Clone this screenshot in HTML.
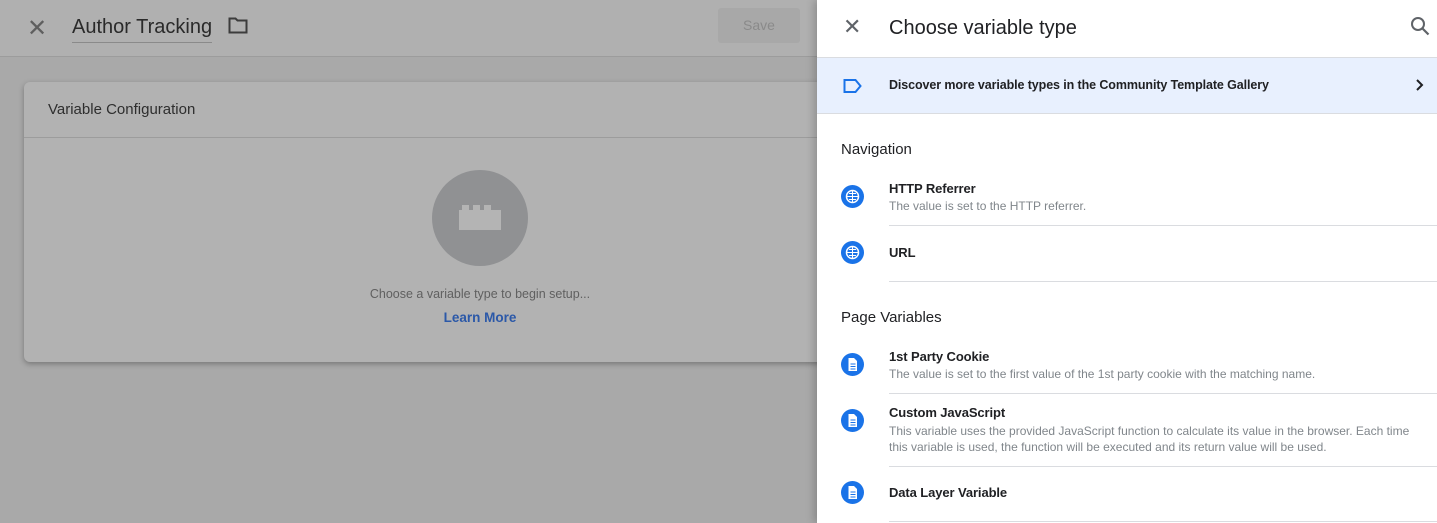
<!DOCTYPE html><html><head><style>
*{margin:0;padding:0;box-sizing:border-box}
body{width:1437px;height:523px;overflow:hidden;font-family:"Liberation Sans",sans-serif;background:#a9a9a9;position:relative}
.abs{position:absolute}
.t{font-size:13px;color:#202124;font-weight:bold;letter-spacing:-.1px}
.d{font-size:12px;color:#80868b}
.hr{position:absolute;left:889px;right:0;height:1px;background:#dadce0}
.ic{position:absolute;left:841px;width:23px;height:23px;border-radius:50%;background:#1a73e8}
</style></head><body>
<div class="abs" style="left:0;top:0;width:817px;height:57px;background:#b0b0b0;border-bottom:1px solid #9c9c9c"></div>
<div class="abs" style="left:27px;top:14px;font-size:24px;color:#5f5f5f">✕</div>
<div class="abs" style="left:72px;top:16px;font-size:20px;color:#2a2a2a;border-bottom:1px solid #8a8a8a;padding-bottom:3px">Author Tracking</div>
<svg class="abs" style="left:228px;top:17px" width="20" height="17" viewBox="0 0 20 17"><path d="M1.5 1.5h6l2 2h9v12h-17z" fill="none" stroke="#3c3c3c" stroke-width="2"/></svg>
<div class="abs" style="left:718px;top:8px;width:82px;height:35px;background:#a8a8a8;border-radius:3px;color:#8a8a8a;font-size:14px;text-align:center;line-height:35px">Save</div>
<div class="abs" style="left:24px;top:82px;width:810px;height:280px;background:#b2b2b2;border-radius:6px;box-shadow:0 2px 6px rgba(0,0,0,.3)"></div>
<div class="abs" style="left:24px;top:137px;width:793px;height:1px;background:#9c9c9c"></div>
<div class="abs" style="left:48px;top:101px;font-size:15px;color:#2e2e2e">Variable Configuration</div>
<div class="abs" style="left:432px;top:170px;width:96px;height:96px;border-radius:50%;background:#909193"></div>
<svg class="abs" style="left:459px;top:204px" width="42" height="26"><path d="M0 6h3v-5h7v5h4v-5h7v5h4v-5h7v5h10v20H0z" fill="#b4b4b4"/></svg>
<div class="abs" style="left:0;width:960px;top:287px;text-align:center;font-size:12.5px;color:#606060">Choose a variable type to begin setup...</div>
<div class="abs" style="left:0;width:960px;top:310px;text-align:center;font-size:13.5px;color:#2b58a8;font-weight:bold">Learn More</div>
<div class="abs" style="left:817px;top:0;width:620px;height:523px;background:#fff;box-shadow:-3px 0 8px rgba(0,0,0,.2)"></div>
<div class="abs" style="left:843px;top:14px;font-size:22px;color:#5f6368">✕</div>
<div class="abs" style="left:889px;top:17px;font-size:20px;color:#202124">Choose variable type</div>
<svg class="abs" style="left:1410px;top:16px" width="20" height="20"><circle cx="8" cy="8" r="6" fill="none" stroke="#5f6368" stroke-width="2"/><path d="M12.5 12.5l6 6" stroke="#5f6368" stroke-width="2.2"/></svg>
<div class="abs" style="left:817px;top:57px;width:620px;height:57px;background:#e8f0fe;border-top:1px solid #dadce0;border-bottom:1px solid #dadce0"></div>
<svg class="abs" style="left:843px;top:78px" width="20" height="16"><path d="M1.5 2h11l5 6-5 6h-11z" fill="none" stroke="#1a73e8" stroke-width="2"/></svg>
<div class="abs t" style="left:889px;top:78px;font-size:12.5px">Discover more variable types in the Community Template Gallery</div>
<svg class="abs" style="left:1415px;top:78px" width="10" height="14"><path d="M2 2l5 5-5 5" fill="none" stroke="#202124" stroke-width="2"/></svg>
<div class="abs" style="left:841px;top:141px;font-size:15px;color:#202124">Navigation</div>
<div class="abs" style="left:841px;top:309px;font-size:15px;color:#202124">Page Variables</div>
<div class="ic" style="top:185px"></div><div class="ic" style="top:241px"></div>
<div class="ic" style="top:353px"></div><div class="ic" style="top:409px"></div><div class="ic" style="top:481px"></div>
<div class="abs t" style="left:889px;top:181px">HTTP Referrer</div>
<div class="abs d" style="left:889px;top:199px">The value is set to the HTTP referrer.</div>
<div class="hr" style="top:225px"></div>
<div class="abs t" style="left:889px;top:245px">URL</div>
<div class="hr" style="top:281px"></div>
<div class="abs t" style="left:889px;top:349px">1st Party Cookie</div>
<div class="abs d" style="left:889px;top:367px">The value is set to the first value of the 1st party cookie with the matching name.</div>
<div class="hr" style="top:393px"></div>
<div class="abs t" style="left:889px;top:405px">Custom JavaScript</div>
<div class="abs d" style="left:889px;top:423px;width:540px;line-height:16px">This variable uses the provided JavaScript function to calculate its value in the browser. Each time this variable is used, the function will be executed and its return value will be used.</div>
<div class="hr" style="top:466px"></div>
<div class="abs t" style="left:889px;top:485px">Data Layer Variable</div>
<div class="hr" style="top:521px"></div>
<svg class="abs" style="left:841px;top:185px" width="23" height="23"><circle cx="11.5" cy="11.5" r="6" fill="none" stroke="#fff" stroke-width="1.5"/><path d="M5.5 11.5h12M11.5 5.5v12M8 8.5h7M8 14.5h7" stroke="#fff" stroke-width="1"/></svg>
<svg class="abs" style="left:841px;top:241px" width="23" height="23"><circle cx="11.5" cy="11.5" r="6" fill="none" stroke="#fff" stroke-width="1.5"/><path d="M5.5 11.5h12M11.5 5.5v12M8 8.5h7M8 14.5h7" stroke="#fff" stroke-width="1"/></svg>
<svg class="abs" style="left:841px;top:353px" width="23" height="23"><path d="M7.5 5h5.5l3 3v10h-8.5z" fill="#fff"/><path d="M9.5 11h5M9.5 13.5h5M9.5 16h5" stroke="#1a73e8" stroke-width="1"/></svg>
<svg class="abs" style="left:841px;top:409px" width="23" height="23"><path d="M7.5 5h5.5l3 3v10h-8.5z" fill="#fff"/><path d="M9.5 11h5M9.5 13.5h5M9.5 16h5" stroke="#1a73e8" stroke-width="1"/></svg>
<svg class="abs" style="left:841px;top:481px" width="23" height="23"><path d="M7.5 5h5.5l3 3v10h-8.5z" fill="#fff"/><path d="M9.5 11h5M9.5 13.5h5M9.5 16h5" stroke="#1a73e8" stroke-width="1"/></svg>
</body></html>
